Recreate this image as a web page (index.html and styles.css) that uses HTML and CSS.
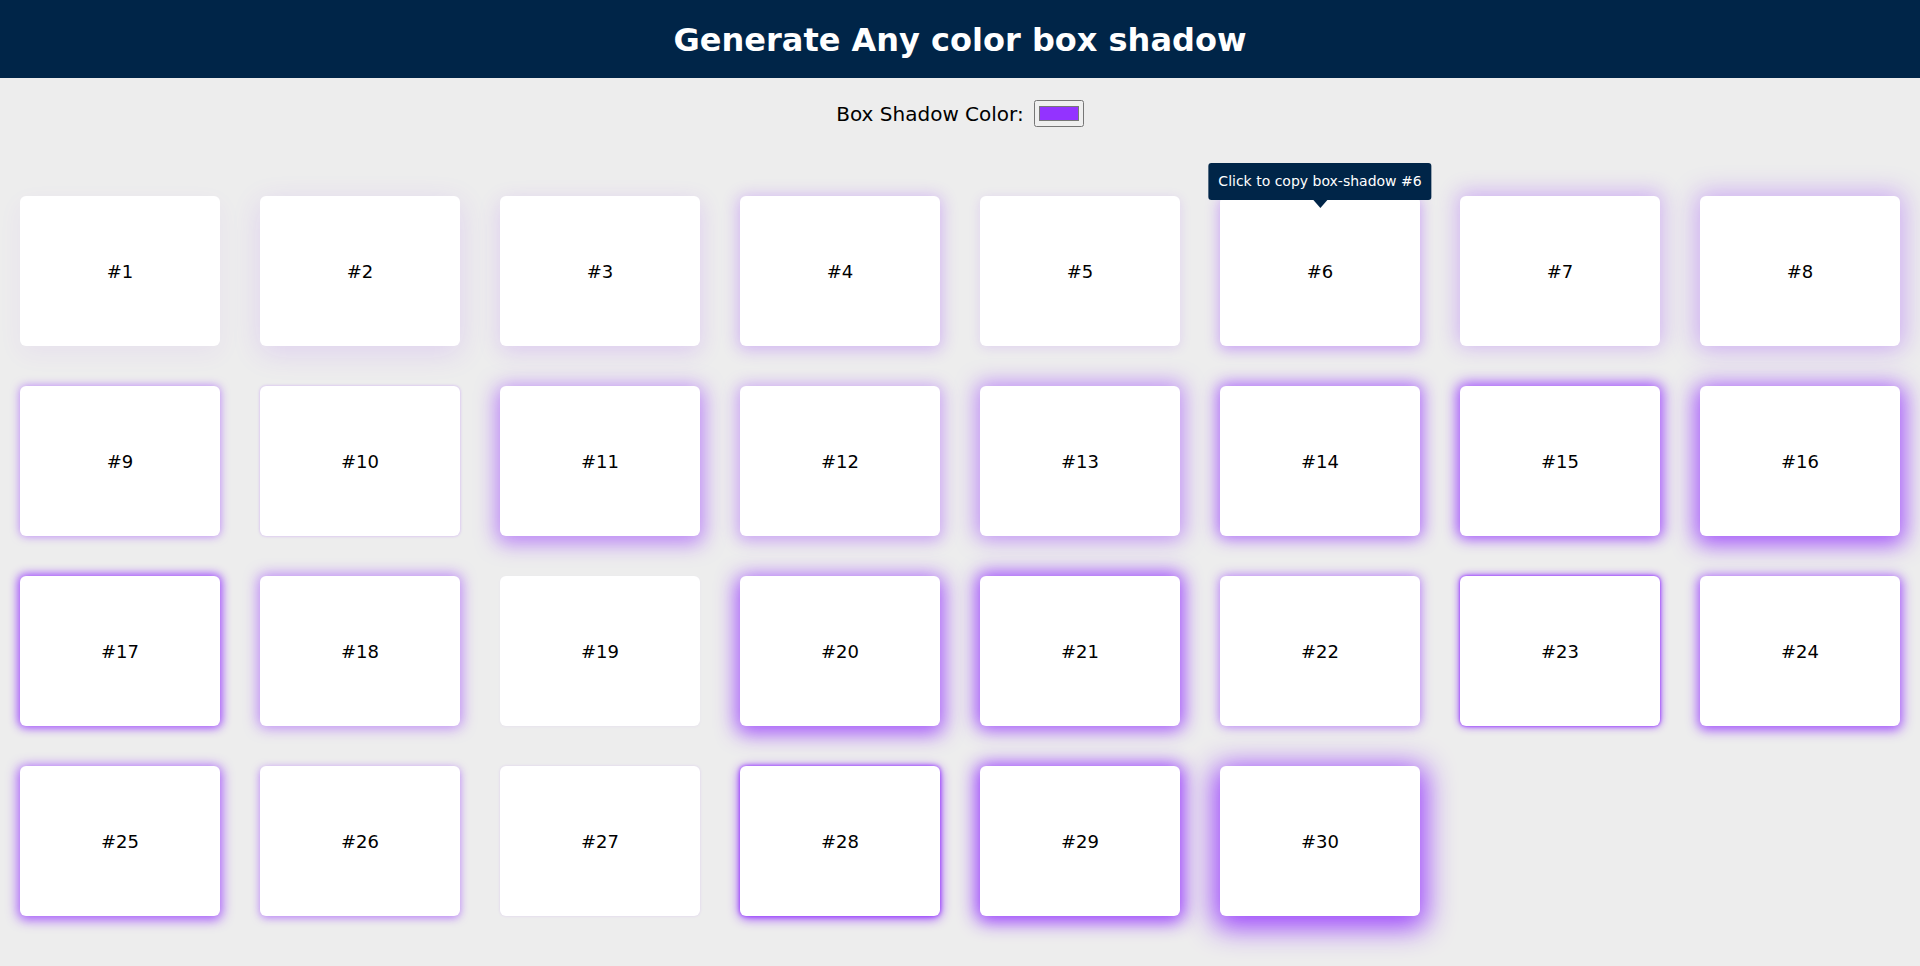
FILE: index.html
```html
<!DOCTYPE html>
<html lang="en">
<head>
<meta charset="utf-8">
<title>Generate Any color box shadow</title>
<link rel="stylesheet" href="styles.css">
</head>
<body>
<header class="top">
  <h1 class="title">Generate Any color box shadow</h1>
</header>
<div class="controls">
  <label class="picker-label" for="c">Box Shadow Color:</label>
  <input id="c" class="picker" type="color" value="#9333ff">
</div>
<main class="grid">
  <div class="card s1">#1</div>
  <div class="card s2">#2</div>
  <div class="card s3">#3</div>
  <div class="card s4">#4</div>
  <div class="card s5">#5</div>
  <div class="card s6">#6<span class="tip">Click to copy box-shadow #6</span></div>
  <div class="card s7">#7</div>
  <div class="card s8">#8</div>
  <div class="card s9">#9</div>
  <div class="card s10">#10</div>
  <div class="card s11">#11</div>
  <div class="card s12">#12</div>
  <div class="card s13">#13</div>
  <div class="card s14">#14</div>
  <div class="card s15">#15</div>
  <div class="card s16">#16</div>
  <div class="card s17">#17</div>
  <div class="card s18">#18</div>
  <div class="card s19">#19</div>
  <div class="card s20">#20</div>
  <div class="card s21">#21</div>
  <div class="card s22">#22</div>
  <div class="card s23">#23</div>
  <div class="card s24">#24</div>
  <div class="card s25">#25</div>
  <div class="card s26">#26</div>
  <div class="card s27">#27</div>
  <div class="card s28">#28</div>
  <div class="card s29">#29</div>
  <div class="card s30">#30</div>
</main>
</body>
</html>
```
FILE: styles.css
```css
html, body {
  margin: 0;
  padding: 0;
}
body {
  background: #ededed;
  font-family: "DejaVu Sans", Verdana, sans-serif;
  color: #000;
}
.top {
  background: #002548;
  height: 78px;
  display: flex;
  align-items: center;
  justify-content: center;
}
.title {
  margin: 0;
  color: #fff;
  font-size: 32px;
  font-weight: bold;
  line-height: 40px;
  padding-top: 2px;
}
.controls {
  display: flex;
  align-items: center;
  justify-content: center;
  gap: 10px;
  margin-top: 22px;
  height: 27px;
}
.picker-label {
  font-size: 20px;
}
.picker {
  width: 50px;
  height: 27px;
  margin: 0;
}
.grid {
  display: grid;
  grid-template-columns: repeat(8, 200px);
  grid-auto-rows: 150px;
  gap: 40px;
  padding: 0 20px 50px;
  margin-top: 69px;
}
.card {
  position: relative;
  background: #fff;
  border-radius: 6px;
  display: flex;
  align-items: center;
  justify-content: center;
  font-size: 18px;
}
.tip {
  position: absolute;
  top: -33px;
  left: 50%;
  transform: translateX(-50%);
  background: #002548;
  color: #fff;
  font-size: 14px;
  line-height: 19px;
  padding: 9px 10px;
  border-radius: 3px;
  white-space: nowrap;
  z-index: 2;
}
.tip::after {
  content: "";
  position: absolute;
  top: 100%;
  left: 50%;
  margin-left: -7px;
  border-left: 7px solid transparent;
  border-right: 7px solid transparent;
  border-top: 8px solid #002548;
}
.s1 { box-shadow: 0 8px 24px rgba(147, 51, 255, 0.06); }
.s2 { box-shadow: 0 7px 29px rgba(147, 51, 255, 0.15); }
.s3 { box-shadow: 0 6px 22px rgba(147, 51, 255, 0.18); }
.s4 { box-shadow: 0 2px 16px 2px rgba(147, 51, 255, 0.3); }
.s5 { box-shadow: 0 2px 12px rgba(147, 51, 255, 0.15); }
.s6 { box-shadow: 0 3px 14px 1px rgba(147, 51, 255, 0.4); }
.s7 { box-shadow: 0 -2px 20px 3px rgba(147, 51, 255, 0.3); }
.s8 { box-shadow: 0 0 24px 4px rgba(147, 51, 255, 0.35); }
.s9 { box-shadow: 0 0 10px rgba(147, 51, 255, 0.6); }
.s10 { box-shadow: 0 0 3px rgba(147, 51, 255, 0.35); }
.s11 { box-shadow: 0 4px 20px 4px rgba(147, 51, 255, 0.55); }
.s12 { box-shadow: 0 2px 16px 3px rgba(147, 51, 255, 0.4); }
.s13 { box-shadow: 0 0 20px 4px rgba(147, 51, 255, 0.5); }
.s14 { box-shadow: 0 0 16px 3px rgba(147, 51, 255, 0.7); }
.s15 { box-shadow: 0 0 14px 3px rgba(147, 51, 255, 0.85); }
.s16 { box-shadow: 0 4px 22px 5px rgba(147, 51, 255, 0.8); }
.s17 { box-shadow: 0 0 10px 2px rgba(147, 51, 255, 0.9); }
.s18 { box-shadow: 0 0 14px 2px rgba(147, 51, 255, 0.55); }
.s19 { box-shadow: 0 1px 3px rgba(147, 51, 255, 0.05); }
.s20 { box-shadow: 0 4px 20px 4px rgba(147, 51, 255, 0.8); }
.s21 { box-shadow: 0 0 18px 4px rgba(147, 51, 255, 0.85); }
.s22 { box-shadow: 0 0 12px rgba(147, 51, 255, 0.7); }
.s23 { box-shadow: 0 0 8px rgb(147, 51, 255), 0 0 3px rgb(147, 51, 255); }
.s24 { box-shadow: 0 2px 12px 2px rgba(147, 51, 255, 0.85); }
.s25 { box-shadow: 0 2px 12px 2px rgba(147, 51, 255, 0.8); }
.s26 { box-shadow: 0 2px 8px rgba(147, 51, 255, 0.6); }
.s27 { box-shadow: 0 0 3px rgba(147, 51, 255, 0.15); }
.s28 { box-shadow: 0 2px 12px rgb(147, 51, 255), 0 0 4px rgb(147, 51, 255); }
.s29 { box-shadow: 0 2px 18px 4px rgba(147, 51, 255, 0.95); }
.s30 { box-shadow: 0 6px 28px 6px rgba(147, 51, 255, 0.9); }
```
